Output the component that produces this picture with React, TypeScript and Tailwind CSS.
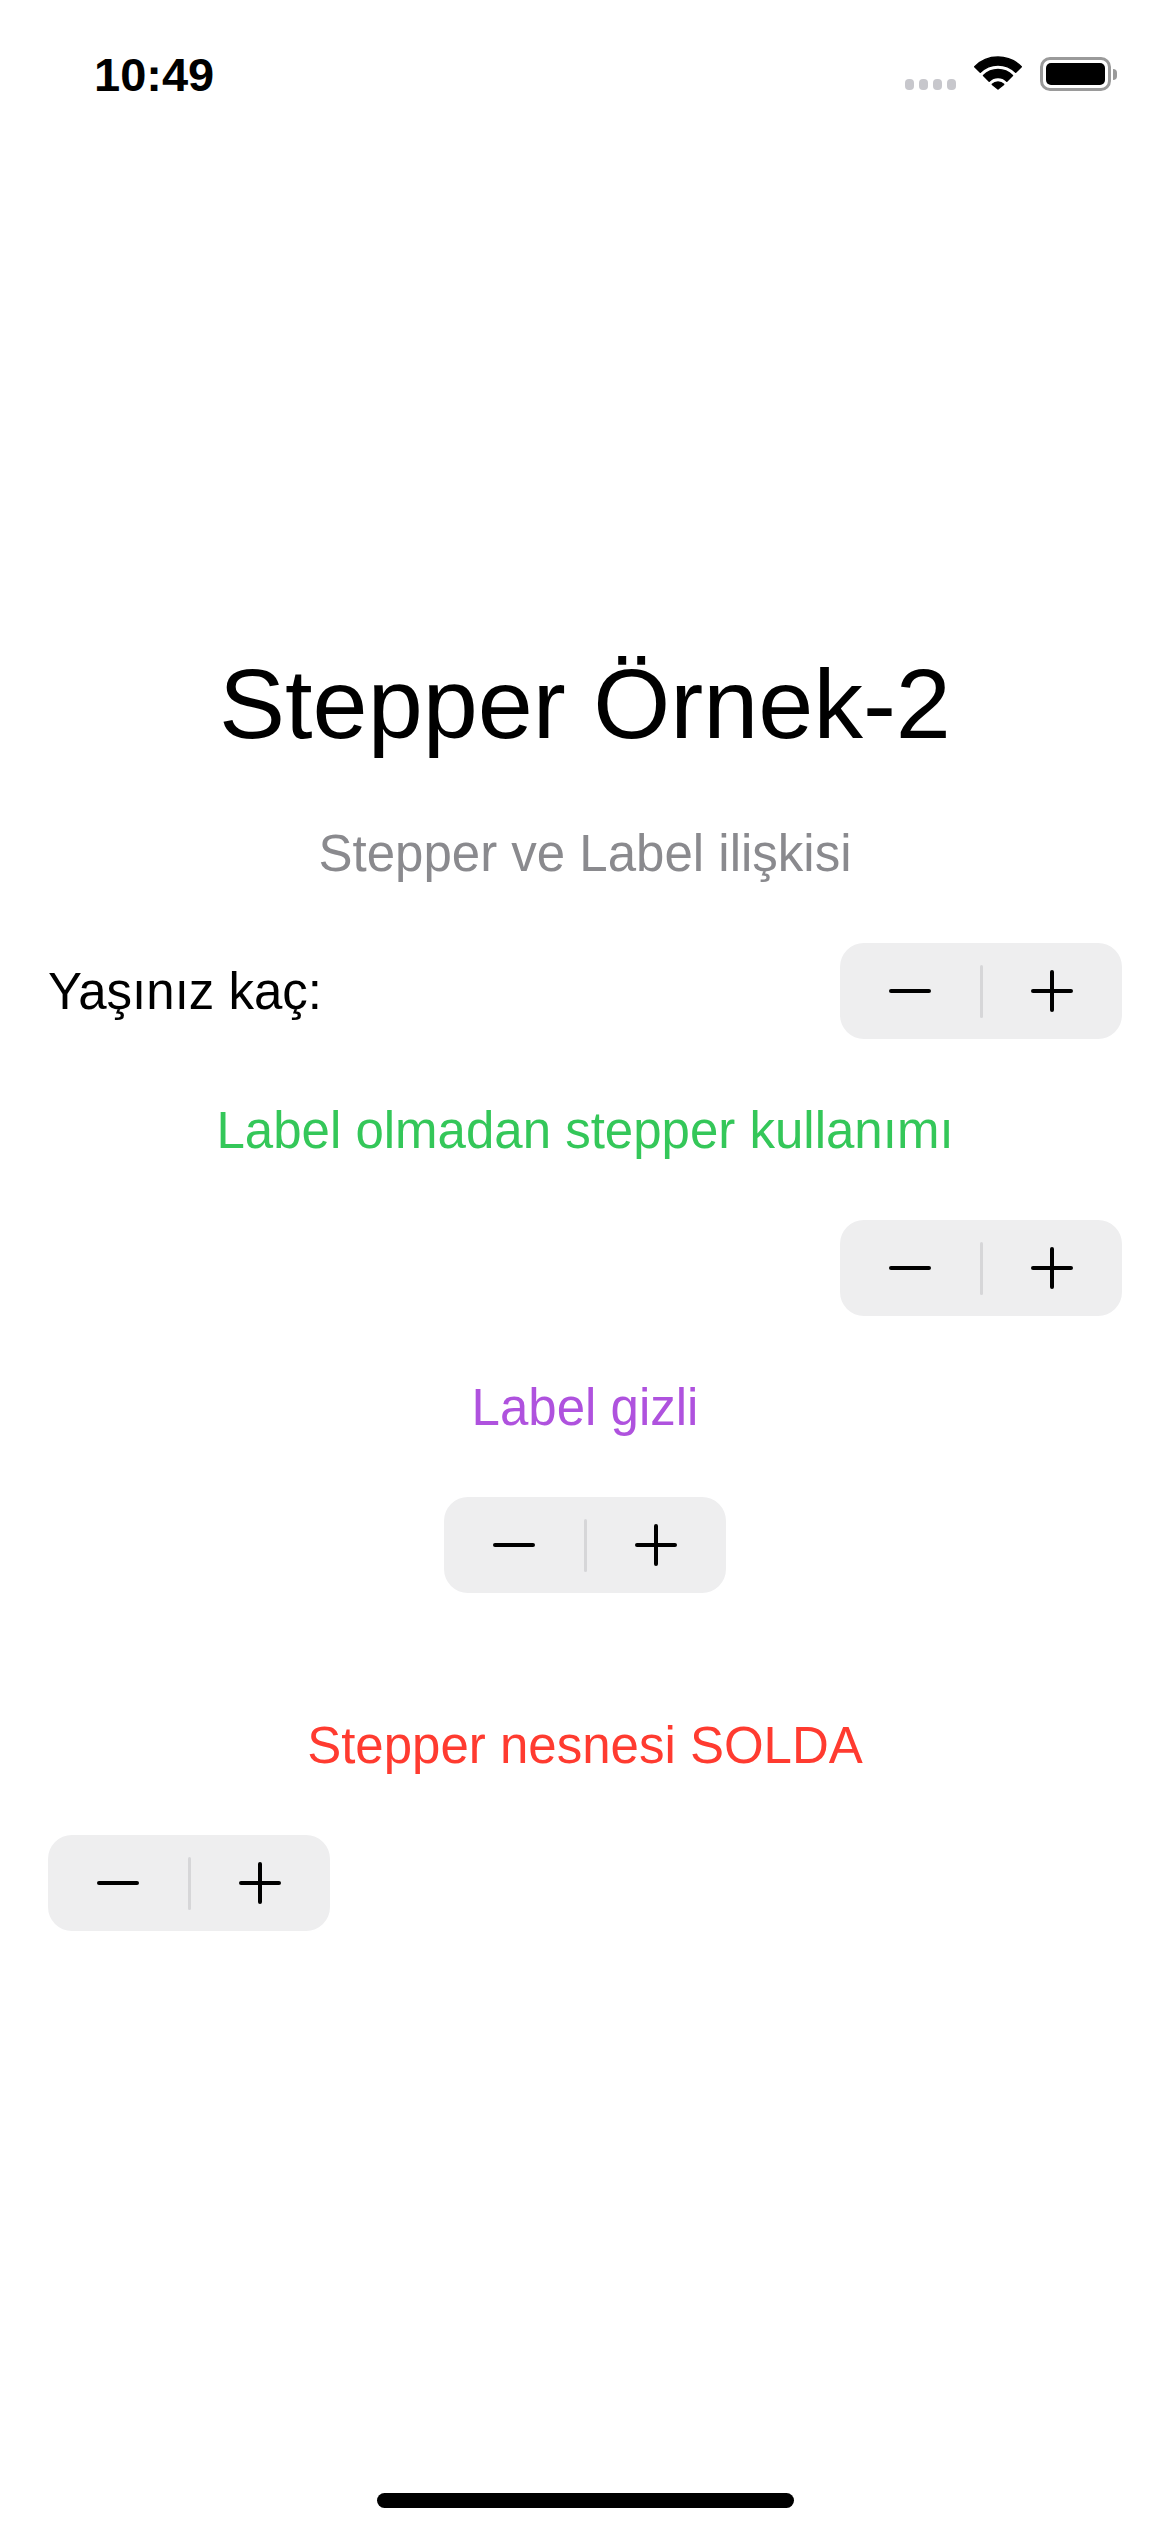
import React from 'react';

const Minus = () => (
  <svg width="42" height="42" viewBox="0 0 42 42" fill="none">
    <line x1="2" y1="21" x2="40" y2="21" stroke="#000" strokeWidth="4" strokeLinecap="round" />
  </svg>
);

const Plus = () => (
  <svg width="42" height="42" viewBox="0 0 42 42" fill="none">
    <line x1="2" y1="21" x2="40" y2="21" stroke="#000" strokeWidth="4" strokeLinecap="round" />
    <line x1="21" y1="2" x2="21" y2="40" stroke="#000" strokeWidth="4" strokeLinecap="round" />
  </svg>
);

const Stepper: React.FC<{ className?: string }> = ({ className = '' }) => (
  <div className={`flex items-center w-[282px] h-[96px] rounded-[24px] bg-[#eeeeef] ${className}`}>
    <button className="flex-1 h-full flex items-center justify-center">
      <Minus />
    </button>
    <div className="w-[3px] h-[53px] rounded-full bg-[#d6d6d8]"></div>
    <button className="flex-1 h-full flex items-center justify-center">
      <Plus />
    </button>
  </div>
);

const StatusBar = () => (
  <div className="h-[148px] flex items-center justify-between pl-[94px] pr-[53px]">
    <span className="text-[47px] font-bold leading-none text-black">10:49</span>
    <div className="flex items-center gap-[18px]">
      {/* signal dots */}
      <div className="flex items-center gap-[5px] mt-[20px]">
        <span className="w-[9px] h-[11px] rounded-[4px] bg-[#c7c7cc]"></span>
        <span className="w-[9px] h-[11px] rounded-[4px] bg-[#c7c7cc]"></span>
        <span className="w-[9px] h-[11px] rounded-[4px] bg-[#c7c7cc]"></span>
        <span className="w-[9px] h-[11px] rounded-[4px] bg-[#c7c7cc]"></span>
      </div>
      {/* wifi */}
      <svg width="48" height="35" viewBox="0 0 48 35" className="-mt-[3px]">
        <g fill="#000" stroke="#000" strokeWidth="1.5" strokeLinejoin="round">
          <path d="M0.7 11.7 A33 33 0 0 1 47.3 11.7 L41.7 17.3 A25 25 0 0 0 6.3 17.3 Z" />
          <path d="M9.5 20.5 A20.5 20.5 0 0 1 38.5 20.5 L32.8 26.2 A12.5 12.5 0 0 0 15.2 26.2 Z" />
          <path d="M18.3 29.3 A8 8 0 0 1 29.7 29.3 L24 34 Z" />
        </g>
      </svg>
      {/* battery */}
      <div className="flex items-center gap-[2px]">
        <div className="w-[71px] h-[34px] rounded-[10px] border-[3px] border-[#9a9a9a] p-[3px]">
          <div className="w-full h-full rounded-[5px] bg-black"></div>
        </div>
        <div className="w-[4px] h-[11px] rounded-r-full bg-[#9a9a9a]"></div>
      </div>
    </div>
  </div>
);

export default function App() {
  return (
    <div className="min-h-[2532px] w-[1170px] bg-white flex flex-col font-['Liberation_Sans',Arial,sans-serif]">
      <StatusBar />

      <main className="flex flex-col px-[48px] mt-[506px]">
        <h1 className="text-center text-[99px] leading-none text-black">Stepper Örnek-2</h1>
        <p className="mt-[75px] text-center text-[51px] leading-none text-[#8a8a8e]">Stepper ve Label ilişkisi</p>

        <div className="mt-[64px] flex items-center justify-between">
          <span className="text-[51px] leading-none text-black">Yaşınız kaç:</span>
          <Stepper />
        </div>

        <p className="mt-[66px] text-center text-[51px] leading-none text-[#34c759]">Label olmadan stepper kullanımı</p>
        <Stepper className="mt-[64px] self-end" />

        <p className="mt-[66px] text-center text-[51px] leading-none text-[#af52de]">Label gizli</p>
        <Stepper className="mt-[64px] self-center" />

        <p className="mt-[127px] text-center text-[51px] leading-none text-[#ff3b30]">Stepper nesnesi SOLDA</p>
        <Stepper className="mt-[64px] self-start" />
      </main>

      <div className="mt-auto mb-[24px] self-center w-[417px] h-[15px] rounded-full bg-black"></div>
    </div>
  );
}
